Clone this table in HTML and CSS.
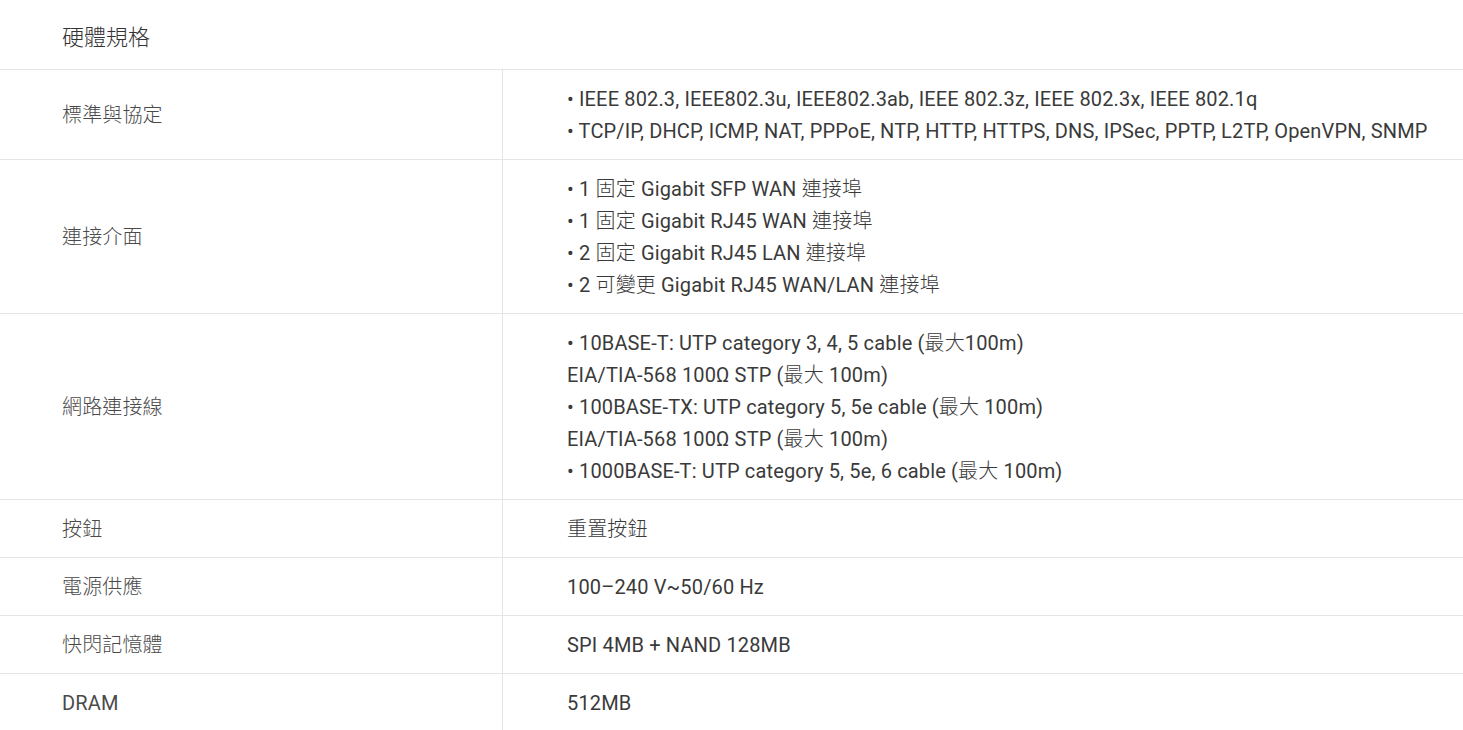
FILE: index.html
```html
<!DOCTYPE html>
<html lang="zh-Hant">
<head>
  <meta charset="UTF-8" />
  <meta name="viewport" content="width=device-width, initial-scale=1.0"/>
  <title>硬體規格</title>
  <link rel="stylesheet" href="styles.css">
</head>
<body>
  <div class="spec">
    <h2 class="spec-title zh">硬體規格</h2>
    <table class="spec-table">
      <tr>
        <th class="zh">標準與協定</th>
        <td>
          • IEEE 802.3, IEEE802.3u, IEEE802.3ab, IEEE 802.3z, IEEE 802.3x, IEEE 802.1q<br>
          • TCP/IP, DHCP, ICMP, NAT, PPPoE, NTP, HTTP, HTTPS, DNS, IPSec, PPTP, L2TP, OpenVPN, SNMP
        </td>
      </tr>
      <tr>
        <th class="zh">連接介面</th>
        <td>
          • 1 <span class="zh">固定</span> Gigabit SFP WAN <span class="zh">連接埠</span><br>
          • 1 <span class="zh">固定</span> Gigabit RJ45 WAN <span class="zh">連接埠</span><br>
          • 2 <span class="zh">固定</span> Gigabit RJ45 LAN <span class="zh">連接埠</span><br>
          • 2 <span class="zh">可變更</span> Gigabit RJ45 WAN/LAN <span class="zh">連接埠</span>
        </td>
      </tr>
      <tr>
        <th class="zh">網路連接線</th>
        <td>
          • 10BASE-T: UTP category 3, 4, 5 cable (<span class="zh">最大</span>100m)<br>
          EIA/TIA-568 100Ω STP (<span class="zh">最大</span> 100m)<br>
          • 100BASE-TX: UTP category 5, 5e cable (<span class="zh">最大</span> 100m)<br>
          EIA/TIA-568 100Ω STP (<span class="zh">最大</span> 100m)<br>
          • 1000BASE-T: UTP category 5, 5e, 6 cable (<span class="zh">最大</span> 100m)
        </td>
      </tr>
      <tr>
        <th class="zh">按鈕</th>
        <td class="zh">重置按鈕</td>
      </tr>
      <tr>
        <th class="zh">電源供應</th>
        <td>100–240 V~50/60 Hz</td>
      </tr>
      <tr>
        <th class="zh">快閃記憶體</th>
        <td>SPI 4MB + NAND 128MB</td>
      </tr>
      <tr>
        <th>DRAM</th>
        <td>512MB</td>
      </tr>
    </table>
  </div>
</body>
</html>
```

FILE: styles.css
```css
body {
  margin: 0;
  background: #fff;
  font-family: Roboto, "Noto Sans CJK TC", sans-serif;
  color: #333;
}
.spec-title {
  margin: 0;
  height: 69px;
  line-height: 76px;
  padding-left: 62px;
  font-size: 22px;
  font-weight: 400;
  color: #333;
  border-bottom: 1px solid #e5e5e5;
}
.spec-table {
  width: 100%;
  border-collapse: collapse;
  font-size: 20px;
  letter-spacing: 0.15px;
  line-height: 32px;
}
.spec-table tr {
  border-bottom: 1px solid #e5e5e5;
}
.spec-table th {
  width: 440px;
  padding: 13px 0 12px 62px;
  text-align: left;
  font-weight: 400;
  color: #4a4a4a;
  vertical-align: middle;
  border-right: 1px solid #e5e5e5;
}
.spec-table td {
  padding: 13px 0 12px 64px;
  color: #3a3a3a;
}
/* CJK glyphs are set in a lighter weight than the latin text */
.spec .zh {
  font-weight: 300;
}
```
